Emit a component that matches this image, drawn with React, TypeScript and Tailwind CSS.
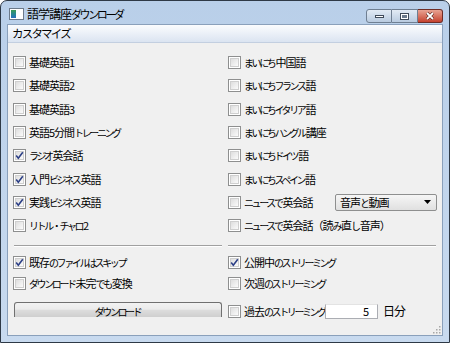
import React from 'react';

const font = "[font-family:'Noto_Sans_CJK_JP','Noto_Sans',sans-serif]";

const leftItems = [
  { label: '基礎英語1', checked: false },
  { label: '基礎英語2', checked: false },
  { label: '基礎英語3', checked: false },
  { label: '英語5分間トレーニング', checked: false },
  { label: 'ラジオ英会話', checked: true },
  { label: '入門ビジネス英語', checked: true },
  { label: '実践ビジネス英語', checked: true },
  { label: 'リトル・チャロ2', checked: false },
];

const rightItems = [
  'まいにち中国語',
  'まいにちフランス語',
  'まいにちイタリア語',
  'まいにちハングル講座',
  'まいにちドイツ語',
  'まいにちスペイン語',
];

// kana in the old UI font are much narrower than kanji, so tighten them separately
function Jp({
  text,
  kana = 'text-[10px] tracking-[-2.4px] mr-[1px]',
  rest = 'tracking-[-1px]',
}: {
  text: string;
  kana?: string;
  rest?: string;
}) {
  const parts = text.split(/([\u3040-\u30ff・]+)/).filter(Boolean);
  return (
    <>
      {parts.map((p, i) => (
        <span key={i} className={/[\u3040-\u30ff・]/.test(p) ? kana : rest}>
          {p}
        </span>
      ))}
    </>
  );
}

function CheckBox({ checked }: { checked?: boolean }) {
  return (
    <span className="relative shrink-0 w-[13px] h-[13px] border border-[#8e8f8f] bg-white p-[1px]">
      <span className="block w-full h-full border border-[#cfcfcf] bg-gradient-to-br from-[#dedede] to-[#fbfbfb]" />
      {checked && (
        <svg className="absolute inset-0" width="11" height="11" viewBox="0 0 11 11">
          <path d="M2.2 5.6 L4.3 8.2 L8.8 2.2" fill="none" stroke="#2c3f86" strokeWidth="1.6" />
        </svg>
      )}
    </span>
  );
}

function Check({ label, checked }: { label: string; checked?: boolean }) {
  return (
    <div className="flex items-center gap-[3px] h-full">
      <CheckBox checked={checked} />
      <span className="text-[11px] leading-none text-black whitespace-nowrap">
        <Jp text={label} />
      </span>
    </div>
  );
}

function Separator() {
  return <div className="h-[2px] border-t border-[#a0a0a0] border-b border-b-white" />;
}

export default function App() {
  return (
    <div className={`w-[450px] h-[343px] flex flex-col rounded-t-[7px] border border-[#2e3946] bg-gradient-to-b from-[#b9cfe9] to-[#c8daef] overflow-hidden ${font}`}>
      {/* title bar */}
      <div className="h-[23px] shrink-0 flex items-center pl-[8px] pr-[6px]">
        <span className="w-[15px] h-[12px] border border-[#6c7a8a] bg-white flex items-center mr-[3px] mt-[2px]">
          <span className="w-[5px] h-[8px] ml-[1px] bg-gradient-to-b from-[#3b9b52] to-[#2a6fbf]" />
        </span>
        <span className="text-[12px] leading-none text-black mt-[2px] whitespace-nowrap">
          <Jp text="語学講座ダウンローダ" kana="text-[11px] tracking-[-2.4px]" rest="tracking-[-1px]" />
        </span>
        <div className="ml-auto flex self-start mt-[8px] h-[14px]">
          <div className="w-[26px] h-full border border-[#6f7f92] rounded-l-[3px] bg-gradient-to-b from-[#e2ebf5] to-[#b9cbe0] flex items-center justify-center">
            <span className="w-[9px] h-[3px] bg-white border border-[#3f4b5a]" />
          </div>
          <div className="w-[26px] h-full border border-l-0 border-[#6f7f92] bg-gradient-to-b from-[#e2ebf5] to-[#b9cbe0] flex items-center justify-center">
            <span className="w-[9px] h-[7px] border border-[#3f4b5a] bg-white p-[1px]">
              <span className="block w-full h-full bg-[#6b7a8c]" />
            </span>
          </div>
          <div className="w-[25px] h-full border border-l-0 border-[#6e2c25] rounded-r-[3px] bg-gradient-to-b from-[#e8a393] to-[#c4402e] flex items-center justify-center">
            <svg width="10" height="8" viewBox="0 0 10 8">
              <path d="M2 1 L8 7 M8 1 L2 7" stroke="#4a1a12" strokeWidth="3" />
              <path d="M2 1 L8 7 M8 1 L2 7" stroke="#fff" strokeWidth="1.8" />
            </svg>
          </div>
        </div>
      </div>

      <div className="flex-1 flex flex-col mx-[6px] mb-[6px] border border-[#8aa0bb]">
        {/* menu bar */}
        <div className="h-[18px] shrink-0 flex items-center pl-[4px] bg-gradient-to-b from-[#fbfcfe] to-[#dbe4f1] border-b border-[#c3cfe0]">
          <span className="text-[12px] leading-none text-black whitespace-nowrap">
            <Jp text="カスタマイズ" kana="text-[11.5px] tracking-[-1.8px]" />
          </span>
        </div>

        {/* client */}
        <div className="relative flex-1 bg-[#f0f0f0] pl-[5px] pt-[8px]">
          <div className="grid grid-cols-[209px_209px] gap-x-[6px]">
            <div className="flex flex-col">
              {leftItems.map((it) => (
                <div key={it.label} className="h-[23.3px]">
                  <Check label={it.label} checked={it.checked} />
                </div>
              ))}
            </div>
            <div className="flex flex-col">
              {rightItems.map((l) => (
                <div key={l} className="h-[23.3px]">
                  <Check label={l} />
                </div>
              ))}
              <div className="h-[23.3px] flex items-center">
                <div className="w-[107px] shrink-0 h-full">
                  <Check label="ニュースで英会話" />
                </div>
                <div className="w-[102px] h-[17px] border border-[#8e8f8f] rounded-[2px] bg-gradient-to-b from-[#f6f6f6] to-[#e0e0e0] flex items-center pl-[4px] pr-[5px]">
                  <span className="text-[11px] leading-none text-black whitespace-nowrap">
                    <Jp text="音声と動画" />
                  </span>
                  <svg className="ml-auto" width="7" height="4" viewBox="0 0 7 4">
                    <path d="M0 0 H7 L3.5 4 Z" fill="#000" />
                  </svg>
                </div>
              </div>
              <div className="h-[23.3px]">
                <Check label="ニュースで英会話（読み直し音声）" />
              </div>
            </div>

            <div className="mt-[8px] pl-[1px]">
              <Separator />
            </div>
            <div className="mt-[8px] pr-[1px]">
              <Separator />
            </div>

            <div className="flex flex-col pt-[5px]">
              <div className="h-[21px]">
                <Check label="既存のファイルはスキップ" checked />
              </div>
              <div className="h-[21px]">
                <Check label="ダウンロード未完でも変換" />
              </div>
              <div className="pt-[8px] pl-[1px]">
                <div className="h-[15px] border border-b-0 border-[#707070] rounded-t-[3px] bg-[linear-gradient(#f2f2f2_0%,#ebebeb_45%,#dddddd_50%,#cfcfcf_100%)] flex items-center justify-center">
                  <span className="text-[11px] leading-none text-black mt-[2px] whitespace-nowrap">
                    <Jp text="ダウンロード" />
                  </span>
                </div>
              </div>
            </div>
            <div className="flex flex-col pt-[5px]">
              <div className="h-[21px]">
                <Check label="公開中のストリーミング" checked />
              </div>
              <div className="h-[21px]">
                <Check label="次週のストリーミング" />
              </div>
              <div className="h-[24px] mt-[5px] flex items-center">
                <div className="w-[97px] shrink-0 h-full">
                  <Check label="過去のストリーミング" />
                </div>
                <div className="w-[53px] h-[15px] border border-[#abadb3] border-t-[#e3e3e3] bg-white flex items-center justify-end pr-[8px]">
                  <span className="text-[11px] leading-none text-black">5</span>
                </div>
                <span className="ml-[5px] text-[12px] leading-none text-black">
                  <Jp text="日分" />
                </span>
              </div>
            </div>
          </div>

          {/* resize grip */}
          <svg className="absolute right-[1px] bottom-[1px]" width="8" height="8" viewBox="0 0 8 8">
            {[[6, 0], [6, 3], [3, 3], [6, 6], [3, 6], [0, 6]].map(([x, y]) => (
              <rect key={`${x}-${y}`} x={x} y={y} width="1.5" height="1.5" fill="#a8a8a8" />
            ))}
          </svg>
        </div>
      </div>
    </div>
  );
}
